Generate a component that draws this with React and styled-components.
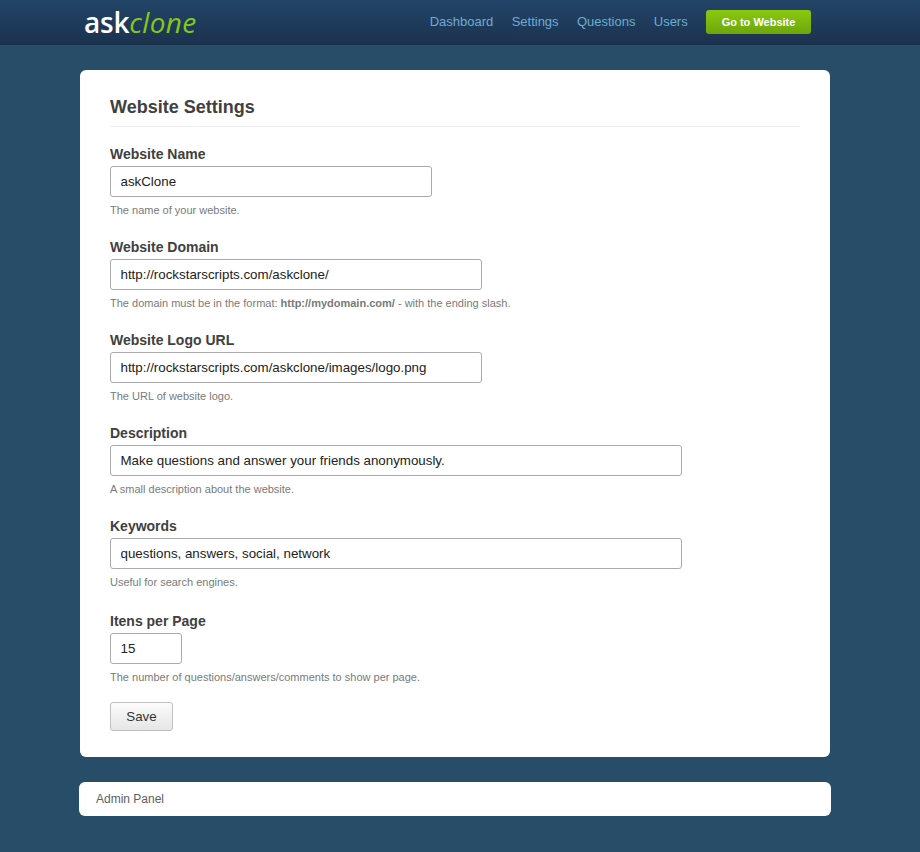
import React from 'react';
import styled, { createGlobalStyle } from 'styled-components';

const GlobalStyle = createGlobalStyle`
  html, body {
    margin: 0;
    padding: 0;
    background-color: #284d69;
    font-family: "Liberation Sans", Arial, sans-serif;
    color: #404040;
  }
`;

const Header = styled.header`
  height: 45px;
  box-sizing: border-box;
  padding: 0 109px 0 84px;
  display: flex;
  align-items: center;
  justify-content: space-between;
  background: linear-gradient(to bottom, #234569, #1b324e);
  border-bottom: 1px solid #1c3350;
`;

const Logo = styled.div`
  font-family: "Open Sans", "Noto Sans", sans-serif;
  font-size: 28px;
  line-height: 43px;
  letter-spacing: -0.2px;
  color: #ffffff;
  font-weight: 600;
  em {
    color: #84c81c;
    font-weight: 400;
    letter-spacing: 0.3px;
  }
`;

const Nav = styled.nav`
  display: flex;
  align-items: center;
  gap: 18.3px;
`;

const NavLink = styled.a`
  font-size: 13px;
  line-height: 16px;
  margin-top: -1px;
  color: #6cacd4;
  text-decoration: none;
`;

const GoButton = styled.a`
  width: 105px;
  height: 24px;
  border-radius: 3px;
  display: flex;
  align-items: center;
  justify-content: center;
  font-size: 11px;
  font-weight: bold;
  color: #ffffff;
  text-decoration: none;
  background: linear-gradient(to bottom, #8bc90e, #6ca50c);
`;

const Main = styled.main`
  width: 750px;
  margin: 25px 0 0 80px;
`;

const Card = styled.section`
  background-color: #ffffff;
  border-radius: 6px;
  padding: 26px 30px;
`;

const Title = styled.h1`
  margin: 0 0 17px;
  padding-bottom: 8px;
  font-size: 18px;
  line-height: 22px;
  font-weight: bold;
  color: #404040;
  border-bottom: 1px solid #eeeeee;
`;

const Field = styled.div`
  margin-top: ${(props) => props.$gap}px;
`;

const Label = styled.label`
  display: block;
  font-size: 14px;
  font-weight: bold;
  line-height: 20px;
  margin-bottom: 2px;
  color: #404040;
`;

const Input = styled.input`
  display: block;
  box-sizing: border-box;
  width: ${(props) => props.$width}px;
  height: 31px;
  padding: 0 10px 0 9.5px;
  border: 1px solid #aaaaaa;
  border-radius: 3px;
  background: #ffffff;
  font-family: "Liberation Sans", Arial, sans-serif;
  font-size: 13.33px;
  color: #222222;
  outline: none;
`;

const Help = styled.p`
  margin: 6px 0 0;
  font-size: 11px;
  line-height: 14px;
  color: #7a7a7a;
`;

const SaveButton = styled.button`
  display: block;
  width: 63px;
  height: 29px;
  margin-top: 18px;
  padding: 0;
  border: 1px solid #c0c0c0;
  border-radius: 3px;
  background: linear-gradient(to bottom, #fbfbfb, #e6e6e6);
  font-family: "Liberation Sans", Arial, sans-serif;
  font-size: 13.33px;
  color: #333333;
`;

const Footer = styled.footer`
  width: 752px;
  height: 34px;
  margin: 25px 0 36px -1px;
  box-sizing: border-box;
  padding: 0 17px;
  display: flex;
  align-items: center;
  background-color: #ffffff;
  border-radius: 6px;
  font-size: 12px;
  color: #606060;
`;

const navItems = ['Dashboard', 'Settings', 'Questions', 'Users'];

const fields = [
  { label: 'Website Name', value: 'askClone', width: 322, gap: 0, help: 'The name of your website.' },
  {
    label: 'Website Domain',
    value: 'http://rockstarscripts.com/askclone/',
    width: 372,
    gap: 20,
    help: (
      <>
        The domain must be in the format: <b>http://mydomain.com/</b> - with the ending slash.
      </>
    ),
  },
  {
    label: 'Website Logo URL',
    value: 'http://rockstarscripts.com/askclone/images/logo.png',
    width: 372,
    gap: 20,
    help: 'The URL of website logo.',
  },
  {
    label: 'Description',
    value: 'Make questions and answer your friends anonymously.',
    width: 572,
    gap: 20,
    help: 'A small description about the website.',
  },
  {
    label: 'Keywords',
    value: 'questions, answers, social, network',
    width: 572,
    gap: 20,
    help: 'Useful for search engines.',
  },
  {
    label: 'Itens per Page',
    value: '15',
    width: 72,
    gap: 22,
    help: 'The number of questions/answers/comments to show per page.',
  },
];

function App() {
  return (
    <>
      <GlobalStyle />
      <Header>
        <Logo>
          ask<em>clone</em>
        </Logo>
        <Nav>
          {navItems.map((item) => (
            <NavLink key={item} href="#">
              {item}
            </NavLink>
          ))}
          <GoButton href="#">Go to Website</GoButton>
        </Nav>
      </Header>
      <Main>
        <Card>
          <Title>Website Settings</Title>
          {fields.map((field) => (
            <Field key={field.label} $gap={field.gap}>
              <Label>{field.label}</Label>
              <Input $width={field.width} value={field.value} readOnly />
              <Help>{field.help}</Help>
            </Field>
          ))}
          <SaveButton type="button">Save</SaveButton>
        </Card>
        <Footer>Admin Panel</Footer>
      </Main>
    </>
  );
}

export default App;
